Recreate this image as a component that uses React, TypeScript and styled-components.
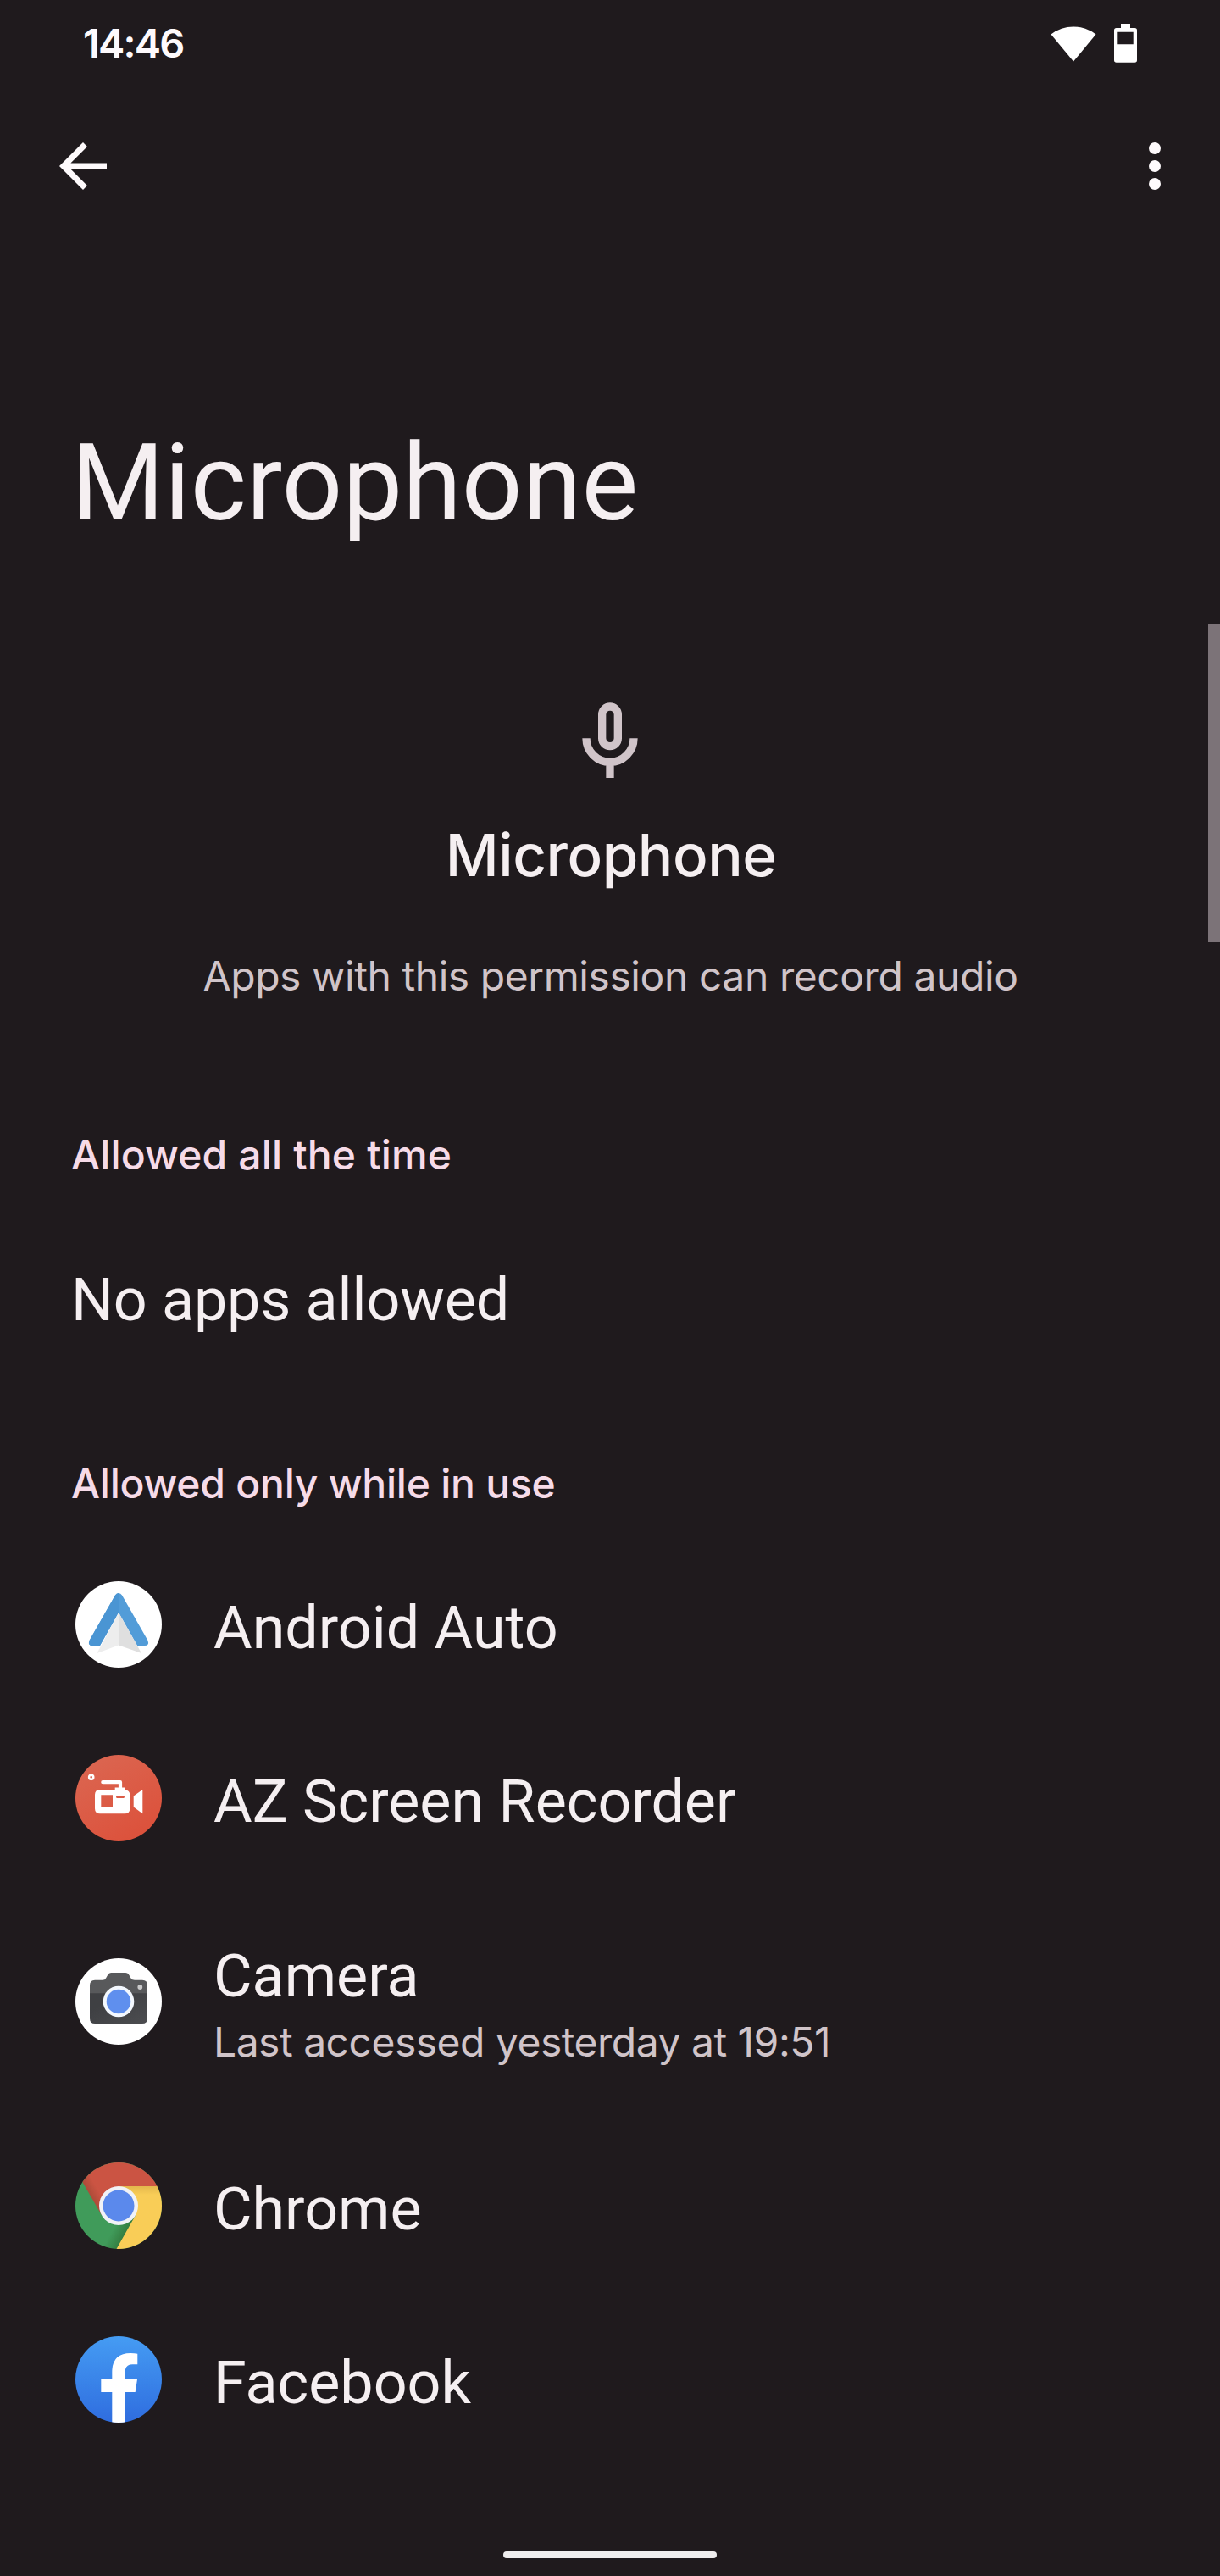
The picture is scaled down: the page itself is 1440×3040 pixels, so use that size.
import React from 'react';
import styled, { createGlobalStyle } from 'styled-components';

const color = {
  background: '#1f1a1d',
  primary: '#f5eff1',
  secondary: '#d0c4c9',
  accent: '#f6dbe8',
  icon: '#fefafc',
};

const GlobalStyle = createGlobalStyle`
  body {
    margin: 0;
    background: ${color.background};
  }
  svg {
    display: block;
    flex: none;
  }
`;

const Screen = styled.div`
  position: relative;
  display: flex;
  flex-direction: column;
  width: 1440px;
  height: 3040px;
  overflow: hidden;
  box-sizing: border-box;
  background: ${color.background};
  color: ${color.primary};
  font-family: Roboto, sans-serif;
  white-space: nowrap;
`;

const StatusBar = styled.header`
  display: flex;
  align-items: center;
  justify-content: space-between;
  height: 98px;
  padding: 4px 98px 0 98px;
  box-sizing: border-box;
`;

const Clock = styled.span`
  font: 600 47px/60px Inter, sans-serif;
  letter-spacing: -1.8px;
  color: ${color.icon};
`;

const StatusIcons = styled.div`
  display: flex;
  align-items: center;
  gap: 21px;
`;

const AppBar = styled.nav`
  display: flex;
  align-items: center;
  justify-content: space-between;
  height: 196px;
  padding: 0 35px 0 56px;
`;

const IconButton = styled.button`
  display: flex;
  width: 84px;
  height: 84px;
  padding: 0;
  border: 0;
  background: none;
  color: ${color.icon};
`;

const Title = styled.h1`
  margin: 202px 0 0 84px;
  font-size: 126px;
  font-weight: 400;
  line-height: 148px;
  letter-spacing: 0.1px;
`;

const Permission = styled.section`
  display: flex;
  flex-direction: column;
  align-items: center;
  margin-top: 176px;
  color: ${color.secondary};
`;

const PermissionName = styled.h2`
  margin: 35px 0 0;
  padding-left: 2px;
  font: 500 69px/84px Inter, sans-serif;
  letter-spacing: -0.45px;
  color: ${color.primary};
`;

const PermissionNote = styled.p`
  margin: 68px 0 0;
  padding-left: 1px;
  font: 400 48px/66px Inter, sans-serif;
  letter-spacing: -0.43px;
`;

const SectionLabel = styled.h3<{ $gap: number; $tracking: number }>`
  margin: ${p => p.$gap}px 0 0 84px;
  font: 500 48px/66px Inter, sans-serif;
  letter-spacing: ${p => p.$tracking}px;
  color: ${color.accent};
`;

const EmptyText = styled.p`
  margin: 97px 0 0 84px;
  font-size: 70px;
  line-height: 82px;
  letter-spacing: -0.1px;
`;

const AppList = styled.ul`
  margin: 30px 0 0;
  padding: 0;
  list-style: none;
`;

const AppRow = styled.li<{ $tall?: boolean }>`
  display: flex;
  align-items: center;
  gap: 61px;
  height: ${p => (p.$tall ? 276 : 205)}px;
  padding-left: 89px;
`;

const AppText = styled.div`
  display: flex;
  flex-direction: column;
  gap: 4px;
  padding-top: 9px;
`;

const AppName = styled.span`
  font-size: 70px;
  line-height: 82px;
`;

const AppSummary = styled.span`
  font: 400 48px/66px Inter, sans-serif;
  letter-spacing: -0.5px;
  color: ${color.secondary};
`;

const NavigationBar = styled.footer`
  display: flex;
  justify-content: center;
  margin-top: auto;
  padding-bottom: 21px;
`;

const NavigationPill = styled.div`
  width: 252px;
  height: 8px;
  border-radius: 4px;
  background: #efedee;
`;

const ScrollThumb = styled.div`
  position: absolute;
  top: 736px;
  right: 0;
  width: 14px;
  height: 376px;
  background: #7c7378;
`;

const WifiIcon = () => (
  <svg width="54" height="46" viewBox="0 0 54 46" fill="#fff">
    <path d="M0.5 12.6A43 43 0 0 1 53.5 12.6L27 44.5Z" />
  </svg>
);

const BatteryIcon = () => (
  <svg width="27" height="46" viewBox="0 0 27 46">
    <path fill="#fff" fillRule="evenodd" d="M8 0H19V5H24.3Q27 5 27 7.700V43Q27 45.700 24.300 45.700H2.700Q0 45.700 0 43V7.700Q0 5 2.700 5H8ZM4.300 9.700V24.300H22.700V9.700Z" />
  </svg>
);

const BackIcon = () => (
  <svg width="84" height="84" viewBox="0 0 24 24" fill="currentColor">
    <path d="M20 11H7.830l5.590-5.590L12 4l-8 8 8 8 1.410-1.410L7.830 13H20z" />
  </svg>
);

const MoreIcon = () => (
  <svg width="84" height="84" viewBox="0 0 24 24" fill="currentColor">
    <circle cx="12" cy="6" r="2" />
    <circle cx="12" cy="12" r="2" />
    <circle cx="12" cy="18" r="2" />
  </svg>
);

const MicIcon = () => (
  <svg width="112" height="112" viewBox="0 0 24 24" fill="none" stroke="currentColor" strokeWidth="2">
    <rect x="10" y="3" width="4" height="10" rx="2" />
    <path d="M6 11a6 6 0 0 0 12 0M12 17v4" />
  </svg>
);

const LogoSvg = ({ children }: { children: React.ReactNode }) => (
  <svg width="102" height="102" viewBox="0 0 102 102">{children}</svg>
);

const AndroidAutoLogo = () => (
  <LogoSvg>
    <circle cx="51" cy="51" r="51" fill="#fff" />
    <path d="M51 14Q53.500 14 55 16.500L85.500 70Q87.500 76 82 76H73L51 37L29 76H20Q14.500 76 16.500 70L47 16.500Q48.500 14 51 14Z" fill="#529cd8" />
    <path d="M51 14Q48.500 14 47 16.500L16.500 70Q14.500 76 20 76H29L51 37Z" fill="#4a95d3" />
    <path d="M51 37L25.500 85L51 75.500Z" fill="#ededed" />
    <path d="M51 37L78 85L51 75.500Z" fill="#dfdfdf" />
  </LogoSvg>
);

const RecorderLogo = () => (
  <LogoSvg>
    <defs>
      <linearGradient id="recorder" x1="0" y1="0" x2="0.6" y2="1">
        <stop offset="0" stopColor="#db6853" />
        <stop offset="1" stopColor="#dc523c" />
      </linearGradient>
    </defs>
    <circle cx="51" cy="51" r="51" fill="url(#recorder)" />
    <circle cx="18.700" cy="26.300" r="2.600" fill="none" stroke="#fff" strokeWidth="2.500" />
    <path d="M32.300 32.200H53V40" fill="none" stroke="#fff" strokeWidth="4.200" strokeLinecap="round" strokeLinejoin="round" />
    <path
      fill="#fff"
      fillRule="evenodd"
      d="M29 41H46.700V38.600H58.300V41Q64.300 42 64.300 47V63.300Q64.300 69.300 58.300 69.300H29Q23 69.300 23 63.300V47Q23 41 29 41ZM30.300 47.300V61.600H44V47.300ZM49.500 48Q48 48 48 49.500Q48 51 49.500 51H56.500Q58 51 58 49.500Q58 48 56.500 48Z"
    />
    <path d="M68.700 48.600L79.300 41V69.300L68.700 61.600Z" fill="#fff" />
  </LogoSvg>
);

const CameraLogo = () => (
  <LogoSvg>
    <defs>
      <linearGradient id="cameraBody" x1="0" y1="0" x2="1" y2="1">
        <stop offset="0.3" stopColor="#3f4043" />
        <stop offset="1" stopColor="#4c4d50" />
      </linearGradient>
    </defs>
    <circle cx="51" cy="51" r="51" fill="#fff" />
    <path d="M17 40H85V71Q85 77 79 77H23Q17 77 17 71Z" fill="url(#cameraBody)" />
    <path d="M17 41.300V31.700Q17 25.700 23 25.700H32Q35 25.700 36 23.500L38 20Q39.500 17 42.500 17H59Q62 17 63.500 20L65.500 23.500Q67 25.700 70 25.700H79Q85 25.700 85 31.700V41.300Z" fill="#58595b" />
    <circle cx="51" cy="51" r="18.300" fill="#f3f8fe" />
    <circle cx="51" cy="51" r="14.300" fill="#5f8fee" />
    <circle cx="76.300" cy="34" r="2.900" fill="#c9c9ca" />
  </LogoSvg>
);

const ChromeLogo = () => (
  <LogoSvg>
    <defs>
      <clipPath id="chromeDisc">
        <circle cx="51" cy="51" r="51" />
      </clipPath>
      <linearGradient id="redShade" gradientUnits="userSpaceOnUse" x1="30" y1="38" x2="19" y2="44.400">
        <stop offset="0" stopColor="#cb5443" />
        <stop offset="1" stopColor="#a94a37" />
      </linearGradient>
      <linearGradient id="greenShade" gradientUnits="userSpaceOnUse" x1="46" y1="76" x2="59" y2="83">
        <stop offset="0" stopColor="#409b5a" />
        <stop offset="1" stopColor="#347f42" />
      </linearGradient>
      <linearGradient id="yellowShade" gradientUnits="userSpaceOnUse" x1="0" y1="28" x2="0" y2="38">
        <stop offset="0" stopColor="#e3b64c" />
        <stop offset="1" stopColor="#f9cd57" />
      </linearGradient>
    </defs>
    <g clipPath="url(#chromeDisc)">
      <rect width="102" height="102" fill="url(#greenShade)" />
      <path d="M51 28H102V102H48.500L70.900 62.500Z" fill="url(#yellowShade)" />
      <path d="M0 8.500V0H102V28H51L31.100 62.500L9.500 25Z" fill="url(#redShade)" />
    </g>
    <circle cx="51" cy="51" r="23" fill="#f1f2f6" />
    <circle cx="51" cy="51" r="18.500" fill="#5b89ec" />
  </LogoSvg>
);

const FacebookLogo = () => (
  <LogoSvg>
    <defs>
      <linearGradient id="facebook" x1="0" y1="0" x2="0" y2="1">
        <stop offset="0" stopColor="#459cf3" />
        <stop offset="1" stopColor="#2f6ddf" />
      </linearGradient>
      <clipPath id="facebookDisc">
        <circle cx="51" cy="51" r="51" />
      </clipPath>
    </defs>
    <circle cx="51" cy="51" r="51" fill="url(#facebook)" />
    <path
      clipPath="url(#facebookDisc)"
      d="M43.300 102V66H30.300V51H43.300V42.500Q43.300 20 65 20Q70 20 73.300 20.700V33.300H67.500Q58.700 33.300 58.700 42V51H73L70.700 66H58.700V102Z"
      fill="#fff"
    />
  </LogoSvg>
);

type AppEntry = { name: string; logo: React.ReactNode; summary?: string };

const apps: AppEntry[] = [
  { name: 'Android Auto', logo: <AndroidAutoLogo /> },
  { name: 'AZ Screen Recorder', logo: <RecorderLogo /> },
  { name: 'Camera', logo: <CameraLogo />, summary: 'Last accessed yesterday at 19:51' },
  { name: 'Chrome', logo: <ChromeLogo /> },
  { name: 'Facebook', logo: <FacebookLogo /> },
];

export default function App() {
  return (
    <>
      <GlobalStyle />
      <Screen>
        <StatusBar>
          <Clock>14:46</Clock>
          <StatusIcons>
            <WifiIcon />
            <BatteryIcon />
          </StatusIcons>
        </StatusBar>
        <AppBar>
          <IconButton aria-label="Back">
            <BackIcon />
          </IconButton>
          <IconButton aria-label="More options">
            <MoreIcon />
          </IconButton>
        </AppBar>
        <Title>Microphone</Title>
        <Permission>
          <MicIcon />
          <PermissionName>Microphone</PermissionName>
          <PermissionNote>Apps with this permission can record audio</PermissionNote>
        </Permission>
        <SectionLabel $gap={145} $tracking={0.16}>Allowed all the time</SectionLabel>
        <EmptyText>No apps allowed</EmptyText>
        <SectionLabel $gap={143} $tracking={-0.23}>Allowed only while in use</SectionLabel>
        <AppList>
          {apps.map(app => (
            <AppRow key={app.name} $tall={Boolean(app.summary)}>
              {app.logo}
              <AppText>
                <AppName>{app.name}</AppName>
                {app.summary && <AppSummary>{app.summary}</AppSummary>}
              </AppText>
            </AppRow>
          ))}
        </AppList>
        <NavigationBar>
          <NavigationPill />
        </NavigationBar>
        <ScrollThumb />
      </Screen>
    </>
  );
}
